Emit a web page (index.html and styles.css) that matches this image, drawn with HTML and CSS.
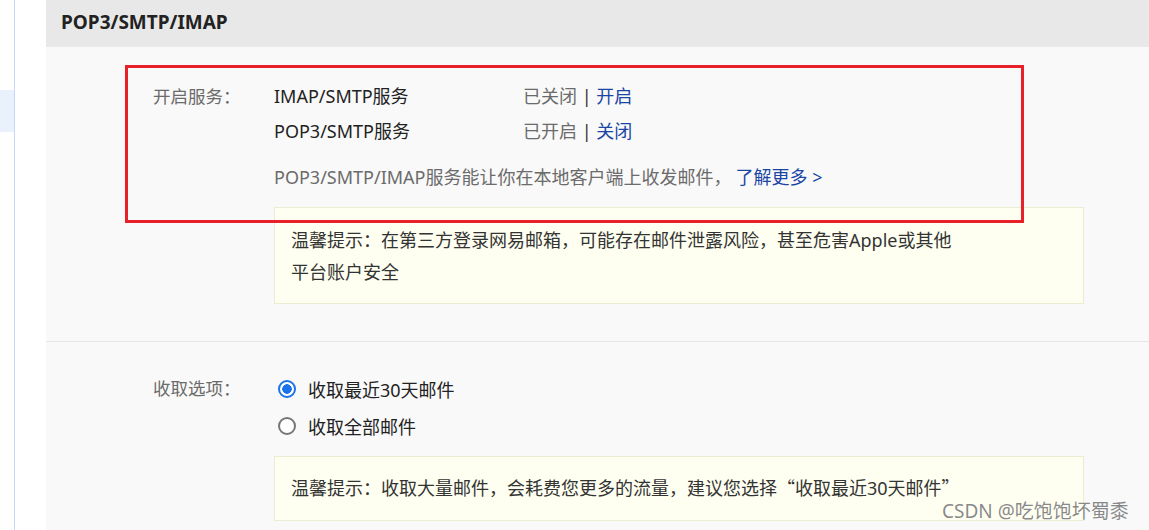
FILE: index.html
```html
<!DOCTYPE html>
<html lang="zh-CN">
<head>
<meta charset="utf-8">
<title>POP3/SMTP/IMAP</title>
<link rel="stylesheet" href="styles.css">
</head>
<body>
<div class="page">
  <aside class="sidebar">
    <div class="side-col">
      <div class="side-item"></div>
    </div>
  </aside>
  <main class="main">
    <div class="head">POP3/SMTP/IMAP</div>

    <section class="section first">
      <div class="row">
        <div class="label">开启服务：</div>
        <div class="value">
          <div class="svc">
            <span class="svc-name">IMAP/SMTP服务</span>
            <span class="svc-state">已关闭 <span class="sep">|</span> <a class="link">开启</a></span>
          </div>
          <div class="svc">
            <span class="svc-name">POP3/SMTP服务</span>
            <span class="svc-state">已开启 <span class="sep">|</span> <a class="link">关闭</a></span>
          </div>
          <div class="desc">POP3/SMTP/IMAP服务能让你在本地客户端上收发邮件，<a class="link">了解更多 &gt;</a></div>
          <div class="tip">温馨提示：在第三方登录网易邮箱，可能存在邮件泄露风险，甚至危害Apple或其他<br>平台账户安全</div>
        </div>
      </div>
    </section>

    <section class="section second">
      <div class="row">
        <div class="label">收取选项：</div>
        <div class="value">
          <div class="opt"><span class="radio checked"></span><span>收取最近30天邮件</span></div>
          <div class="opt"><span class="radio"></span><span>收取全部邮件</span></div>
          <div class="tip tip2">温馨提示：收取大量邮件，会耗费您更多的流量，建议您选择<span class="q">“</span>收取最近30天邮件<span class="q">”</span></div>
        </div>
      </div>
    </section>
  </main>
  <div class="mark"></div>
  <div class="watermark">CSDN @吃饱饱坏蜀黍</div>
</div>
</body>
</html>
```
FILE: styles.css
```css
* { box-sizing: border-box; }
html, body {
  margin: 0;
  padding: 0;
  height: 530px;
  overflow: hidden;
  background: #ffffff;
  font-family: "Noto Sans", "Noto Sans CJK SC", sans-serif;
}
.page {
  position: relative;
  display: flex;
  height: 530px;
}
.sidebar {
  width: 46px;
  flex: none;
  background: #ffffff;
}
.side-col {
  width: 15px;
  height: 100%;
  border-right: 1px solid #c6d6f6;
  padding-top: 90px;
}
.side-item {
  height: 42px;
  background: #e9f1fd;
}
.main {
  flex: 1;
  background: #f9f9f9;
}
.head {
  height: 47px;
  background: #e8e8e8;
  padding-left: 15px;
  line-height: 44px;
  font-size: 19px;
  font-weight: 700;
  color: #222;
}
.section {
  padding-left: 107px;
}
.first {
  padding-top: 32px;
  padding-bottom: 37px;
  border-bottom: 1px solid #e6e6e6;
}
.second {
  padding-top: 28px;
}
.row {
  display: flex;
}
.label {
  width: 121px;
  flex: none;
  font-size: 17.5px;
  line-height: 35px;
  color: #6b6b6b;
}
.second .label { line-height: 37px; }
.value {
  flex: none;
  width: 810px;
}
.svc {
  display: flex;
  font-size: 18px;
  line-height: 35px;
  color: #222;
}
.svc-name { width: 249px; }
.svc-state { color: #6b6b6b; }
.sep { color: #333; }
.link { color: #1a45a5; text-decoration: none; }
.desc {
  margin-top: 11px;
  font-size: 18px;
  line-height: 35px;
  color: #6b6b6b;
}
.desc .link { margin-left: 4px; }
.tip {
  margin-top: 12px;
  background: #fefff0;
  border: 1px solid #ececd2;
  padding: 16px 16px 15px;
  font-size: 18px;
  line-height: 32px;
  color: #333;
}
.tip2 {
  margin-top: 12px;
  padding: 14px 16px 16px;
}
.q {
  font-family: "Noto Sans CJK SC", sans-serif;
  font-feature-settings: "fwid" 1;
}
.opt {
  display: flex;
  align-items: center;
  height: 37px;
  font-size: 18px;
  color: #222;
}
.radio {
  width: 18px;
  height: 18px;
  border-radius: 50%;
  border: 2px solid #777;
  background: #fff;
  margin-left: 4px;
  margin-right: 12px;
  flex: none;
}
.radio.checked {
  border-color: #1a73e8;
  background: radial-gradient(circle, #1a73e8 0 4.5px, #fff 5px);
}
.mark {
  position: absolute;
  left: 125px;
  top: 65px;
  width: 899px;
  height: 158px;
  border: 3px solid #e8202a;
  pointer-events: none;
}
.watermark {
  position: absolute;
  left: 942px;
  top: 497px;
  font-size: 19px;
  line-height: 28px;
  color: rgba(115, 115, 115, 0.85);
  text-shadow: 0 0 1px #fff;
  white-space: nowrap;
}
```
